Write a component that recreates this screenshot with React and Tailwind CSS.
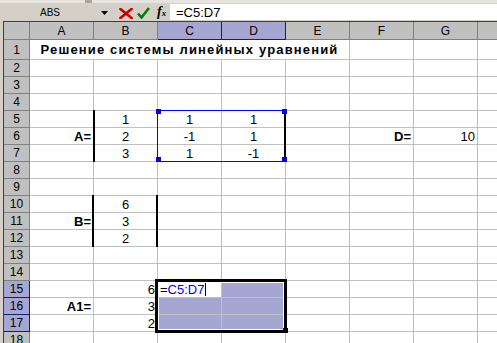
import React from 'react'

const COLS = ['A', 'B', 'C', 'D', 'E', 'F', 'G']

// cell contents: [text, how]  c = centred, r = right, rb = right + bold
const DATA = {
  5: { B: ['1'], C: ['1'], D: ['1'] },
  6: { A: ['A=', 'rb'], B: ['2'], C: ['-1'], D: ['1'], F: ['D=', 'rb'], G: ['10', 'r'] },
  7: { B: ['3'], C: ['1'], D: ['-1'] },
  10: { B: ['6'] },
  11: { A: ['B=', 'rb'], B: ['3'] },
  12: { B: ['2'] },
  15: { B: ['6', 'r'] },
  16: { A: ['A1=', 'rb'], B: ['3', 'r'] },
  17: { B: ['2', 'r'] }
}

function Cell ({ item, lav, white, children }) {
  const how = item ? item[1] || 'c' : 'c'
  const align = how === 'c' ? 'justify-center' : 'justify-end pr-[2px]'
  const weight = how === 'rb' ? 'font-bold' : ''
  const bg = lav ? 'bg-[#a6a6d2]' : 'bg-white'
  return (
    <div className={`w-[64px] shrink-0 h-full border-r border-b border-[#c0c0c0] flex items-center ${white ? 'bg-white justify-start pl-[2px]' : bg + ' ' + align} ${weight}`}>
      {children || (item ? item[0] : null)}
    </div>
  )
}

function RowHead ({ n, sel }) {
  return (
    <div className={`w-[26px] shrink-0 h-full border-r border-b flex items-center justify-center text-[12px] ${sel ? 'bg-[#a6a6d2] border-[#0a246a]' : 'bg-[#c0c0c0] border-[#808080]'}`}>
      {n}
    </div>
  )
}

function Row ({ n }) {
  const sel = n >= 15 && n <= 17
  const cells = DATA[n] || {}

  if (n === 1) {
    return (
      <div className="flex h-[20px]">
        <RowHead n={n} />
        <div className="w-[320px] shrink-0 h-full border-r border-b border-[#c0c0c0] bg-white flex items-center justify-center font-bold text-[13px] tracking-[1.15px]">
          Решение системы линейных уравнений
        </div>
        <Cell />
        <Cell />
        <div className="flex-1 h-full border-b border-[#c0c0c0] bg-white" />
      </div>
    )
  }

  return (
    <div className="flex h-[17px]">
      <RowHead n={n} sel={sel} />
      {COLS.map(c => {
        if (n === 15 && c === 'C') {
          return (
            <Cell key={c} white>
              <span>=</span>
              <span className="text-[#0000ff]">C5:D7</span>
              <span className="inline-block w-px h-[14px] bg-black ml-[1px]" />
            </Cell>
          )
        }
        return <Cell key={c} item={cells[c]} lav={sel && (c === 'C' || c === 'D')} />
      })}
      <div className="flex-1 h-full border-b border-[#c0c0c0] bg-white" />
    </div>
  )
}

function App () {
  const rowNums = Array.from({ length: 18 }, (_, i) => i + 1)

  return (
    <div className="relative w-[497px] h-[343px] overflow-hidden bg-[#d4d0c8] text-black font-['Liberation_Sans',Arial,sans-serif] text-[13px] leading-none">
      {/* formula bar */}
      <div className="h-[3px] bg-[#e6e4de] flex">
        <div className="w-[85px]" />
        <div className="w-[7px] bg-[#a8a6a0]" />
      </div>
      <div className="h-[18px] flex items-start">
        <div className="w-[98px] h-[17px] flex items-center pl-[40px] text-[10px] mt-[1px]">ABS</div>
        <svg width="8" height="5" viewBox="0 0 8 5" className="mt-[8px] ml-[3px]">
          <path d="M0 0h7L3.5 4z" fill="#000" />
        </svg>
        <svg width="14" height="11" viewBox="0 0 14 11" className="mt-[5px] ml-[10px]">
          <path d="M1.5 1l11 9M12.5 1l-11 9" stroke="#cc0000" strokeWidth="2.6" strokeLinecap="square" />
        </svg>
        <svg width="13" height="12" viewBox="0 0 13 12" className="mt-[4px] ml-[4px]">
          <path d="M1 6.5l3.5 4L12 1" stroke="#008000" strokeWidth="2.6" fill="none" />
        </svg>
        <div className="ml-[7px] mt-[2px] w-[12px] font-['Liberation_Serif',serif] italic font-bold text-[14px]">
          f<span className="text-[9px]">x</span>
        </div>
        <div className="ml-[1px] mt-[1px] flex-1 h-[16px] bg-white flex items-center pl-[6px] text-[13px]">=C5:D7</div>
      </div>

      {/* sheet */}
      <div className="pl-[3px]">
        <div className="border-l border-t border-[#404040]">
          <div className="flex h-[18px] text-[12px]">
            <div className="w-[26px] shrink-0 h-full bg-[#c0c0c0] border-r border-b border-[#808080]" />
            {COLS.map(c => (
              <div
                key={c}
                className={`w-[64px] shrink-0 h-full border-r border-b flex items-center justify-center ${c === 'C' || c === 'D' ? 'bg-[#a6a6d2] border-[#0a246a]' : 'bg-[#c0c0c0] border-[#808080]'}`}
              >
                {c}
              </div>
            ))}
            <div className="flex-1 h-full bg-[#c0c0c0] border-b border-[#808080]" />
          </div>
          {rowNums.map(n => <Row key={n} n={n} />)}
        </div>
      </div>

      {/* matrix brackets */}
      <div className="absolute left-[93px] top-[110px] w-[2px] h-[52px] bg-black" />
      <div className="absolute left-[92px] top-[195px] w-[2px] h-[52px] bg-black" />
      <div className="absolute left-[156px] top-[195px] w-[2px] h-[52px] bg-black" />

      {/* range reference C5:D7 */}
      <div className="absolute left-[157px] top-[110px] w-[129px] h-[52px] border border-[#0000ff]" />
      <div className="absolute left-[284px] top-[110px] w-[2px] h-[52px] bg-black" />
      <div className="absolute left-[156px] top-[109px] w-[5px] h-[5px] bg-[#0000ff]" />
      <div className="absolute left-[282px] top-[109px] w-[5px] h-[5px] bg-[#0000ff]" />
      <div className="absolute left-[156px] top-[157px] w-[5px] h-[5px] bg-[#0000ff]" />
      <div className="absolute left-[282px] top-[157px] w-[5px] h-[5px] bg-[#0000ff]" />

      {/* active selection C15:D17 */}
      <div className="absolute left-[155px] top-[279px] w-[132px] h-[54px] border-[3px] border-black shadow-[inset_0_0_0_1px_#ffffff]" />
      <div className="absolute left-[283px] top-[328px] w-[5px] h-[5px] bg-black" />
    </div>
  )
}

export default App
